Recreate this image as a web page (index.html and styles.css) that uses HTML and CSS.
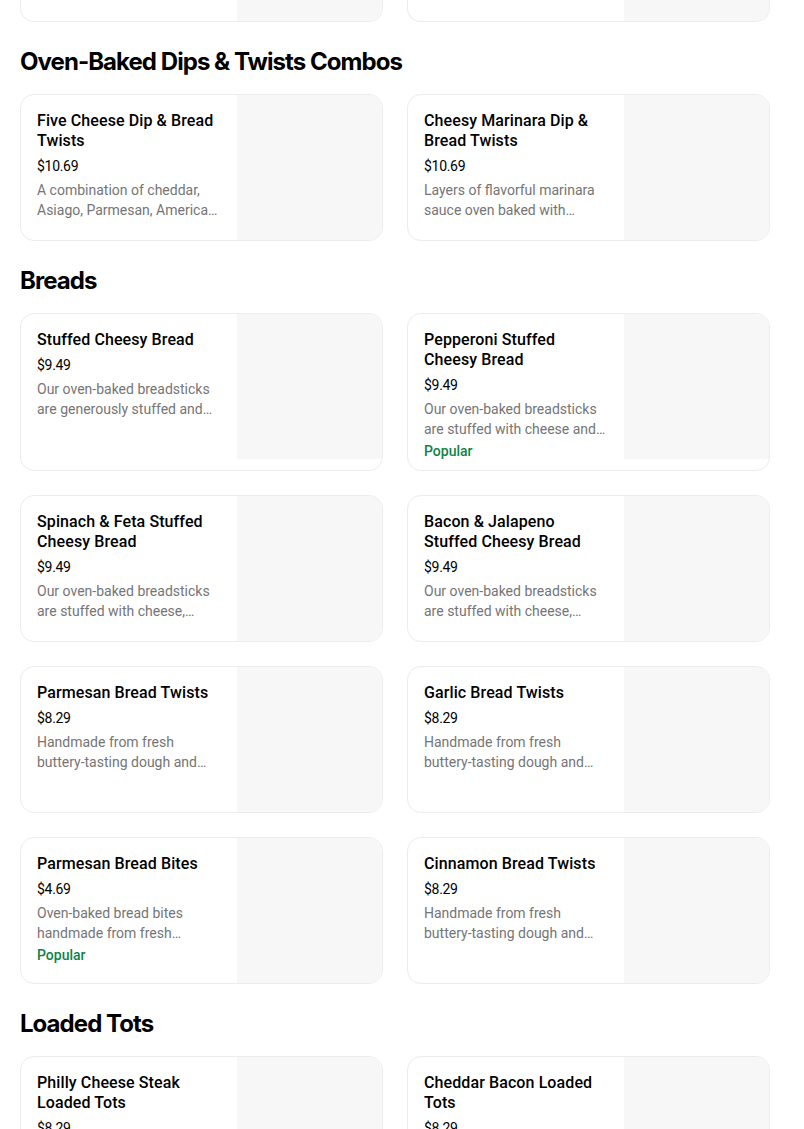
FILE: index.html
```html
<!DOCTYPE html>
<html>
<head>
<meta charset="utf-8">
<link rel="stylesheet" href="styles.css">
</head>
<body>
<main class="page">
  <div class="grid stub-row">
    <div class="card stub"><div class="info"></div><div class="thumb"></div></div>
    <div class="card stub"><div class="info"></div><div class="thumb"></div></div>
  </div>

  <section class="section">
    <h2 class="section-title">Oven-Baked Dips &amp; Twists Combos</h2>
    <div class="grid">
      <div class="card"><div class="info"><div class="name">Five Cheese Dip &amp; Bread Twists</div><div class="price">$10.69</div><div class="desc">A combination of cheddar, Asiago, Parmesan, American, and provolone cheeses oven baked with bread twists.</div></div><div class="thumb"></div></div>
      <div class="card"><div class="info"><div class="name">Cheesy Marinara Dip &amp; Bread Twists</div><div class="price">$10.69</div><div class="desc">Layers of flavorful marinara sauce oven baked with mozzarella cheese and bread twists.</div></div><div class="thumb"></div></div>
    </div>
  </section>

  <section class="section">
    <h2 class="section-title">Breads</h2>
    <div class="grid">
      <div class="card"><div class="info"><div class="name">Stuffed Cheesy Bread</div><div class="price">$9.49</div><div class="desc">Our oven-baked breadsticks are generously stuffed and covered with a blend of cheeses.</div></div><div class="thumb"></div></div>
      <div class="card"><div class="info"><div class="name">Pepperoni Stuffed Cheesy Bread</div><div class="price">$9.49</div><div class="desc">Our oven-baked breadsticks are stuffed with cheese and pepperoni.</div><div class="tag">Popular</div></div><div class="thumb"></div></div>
      <div class="card"><div class="info"><div class="name">Spinach &amp; Feta Stuffed Cheesy Bread</div><div class="price">$9.49</div><div class="desc">Our oven-baked breadsticks are stuffed with cheese, <span class="nowrap">fresh spinach</span> and feta.</div></div><div class="thumb"></div></div>
      <div class="card"><div class="info"><div class="name">Bacon &amp; Jalapeno Stuffed Cheesy Bread</div><div class="price">$9.49</div><div class="desc">Our oven-baked breadsticks are stuffed with cheese, bacon and jalapeno.</div></div><div class="thumb"></div></div>
      <div class="card"><div class="info"><div class="name">Parmesan Bread Twists</div><div class="price">$8.29</div><div class="desc">Handmade from fresh <span class="nowrap">buttery-tasting</span> dough and baked to golden perfection.</div></div><div class="thumb"></div></div>
      <div class="card"><div class="info"><div class="name">Garlic Bread Twists</div><div class="price">$8.29</div><div class="desc">Handmade from fresh <span class="nowrap">buttery-tasting</span> dough and baked to golden perfection.</div></div><div class="thumb"></div></div>
      <div class="card"><div class="info"><div class="name">Parmesan Bread Bites</div><div class="price">$4.69</div><div class="desc">Oven-baked bread bites handmade from fresh <span class="nowrap">buttery-tasting</span> dough.</div><div class="tag">Popular</div></div><div class="thumb"></div></div>
      <div class="card"><div class="info"><div class="name">Cinnamon Bread Twists</div><div class="price">$8.29</div><div class="desc">Handmade from fresh <span class="nowrap">buttery-tasting</span> dough and baked to golden perfection.</div></div><div class="thumb"></div></div>
    </div>
  </section>

  <section class="section">
    <h2 class="section-title">Loaded Tots</h2>
    <div class="grid">
      <div class="card"><div class="info"><div class="name">Philly Cheese Steak Loaded Tots</div><div class="price">$8.29</div><div class="desc">Crispy tots topped with steak, onions and cheese.</div></div><div class="thumb"></div></div>
      <div class="card"><div class="info"><div class="name">Cheddar Bacon Loaded Tots</div><div class="price">$8.29</div><div class="desc">Crispy tots topped with cheddar and bacon.</div></div><div class="thumb"></div></div>
    </div>
  </section>
</main>
</body>
</html>
```
FILE: styles.css
```css
* { box-sizing: border-box; }
html, body { margin: 0; padding: 0; background: #fff; }
body {
  font-family: Roboto, "Noto Sans", "Liberation Sans", sans-serif;
  color: #000;
  overflow: hidden;
}
.page {
  width: 750px;
  margin-left: 20px;
}
.grid {
  display: grid;
  grid-template-columns: 363px 363px;
  column-gap: 24px;
  row-gap: 24px;
}
.section-title {
  margin: 24px 0 16px;
  font-family: Inter, "Noto Sans", sans-serif;
  font-size: 24px;
  line-height: 32px;
  font-weight: 700;
  letter-spacing: -0.95px;
}
.card {
  display: flex;
  border: 1px solid #ececec;
  border-radius: 14px;
  overflow: hidden;
  background: #fff;
}
.info {
  flex: 1;
  min-width: 0;
  padding: 16px 16px 10px;
}
.thumb {
  flex: none;
  width: 145px;
  height: 145px;
  background: #f7f7f7;
}
.stub {
  height: 22px;
  border-top: none;
  border-radius: 0 0 14px 14px;
}
.stub .thumb { height: 21px; }
.stub .info { padding: 0; }
.name {
  font-size: 16px;
  line-height: 20px;
  font-weight: 500;
  letter-spacing: 0.1px;
}
.price {
  margin-top: 5px;
  font-size: 14px;
  line-height: 20px;
  letter-spacing: -0.3px;
}
.desc {
  margin-top: 4px;
  font-size: 14px;
  line-height: 20px;
  color: #757575;
  letter-spacing: 0;
  display: -webkit-box;
  -webkit-line-clamp: 2;
  -webkit-box-orient: vertical;
  overflow: hidden;
}
.nowrap { white-space: nowrap; }
.tag {
  margin-top: 3px;
  font-size: 14px;
  line-height: 18px;
  font-weight: 500;
  color: #0e8345;
}
```
